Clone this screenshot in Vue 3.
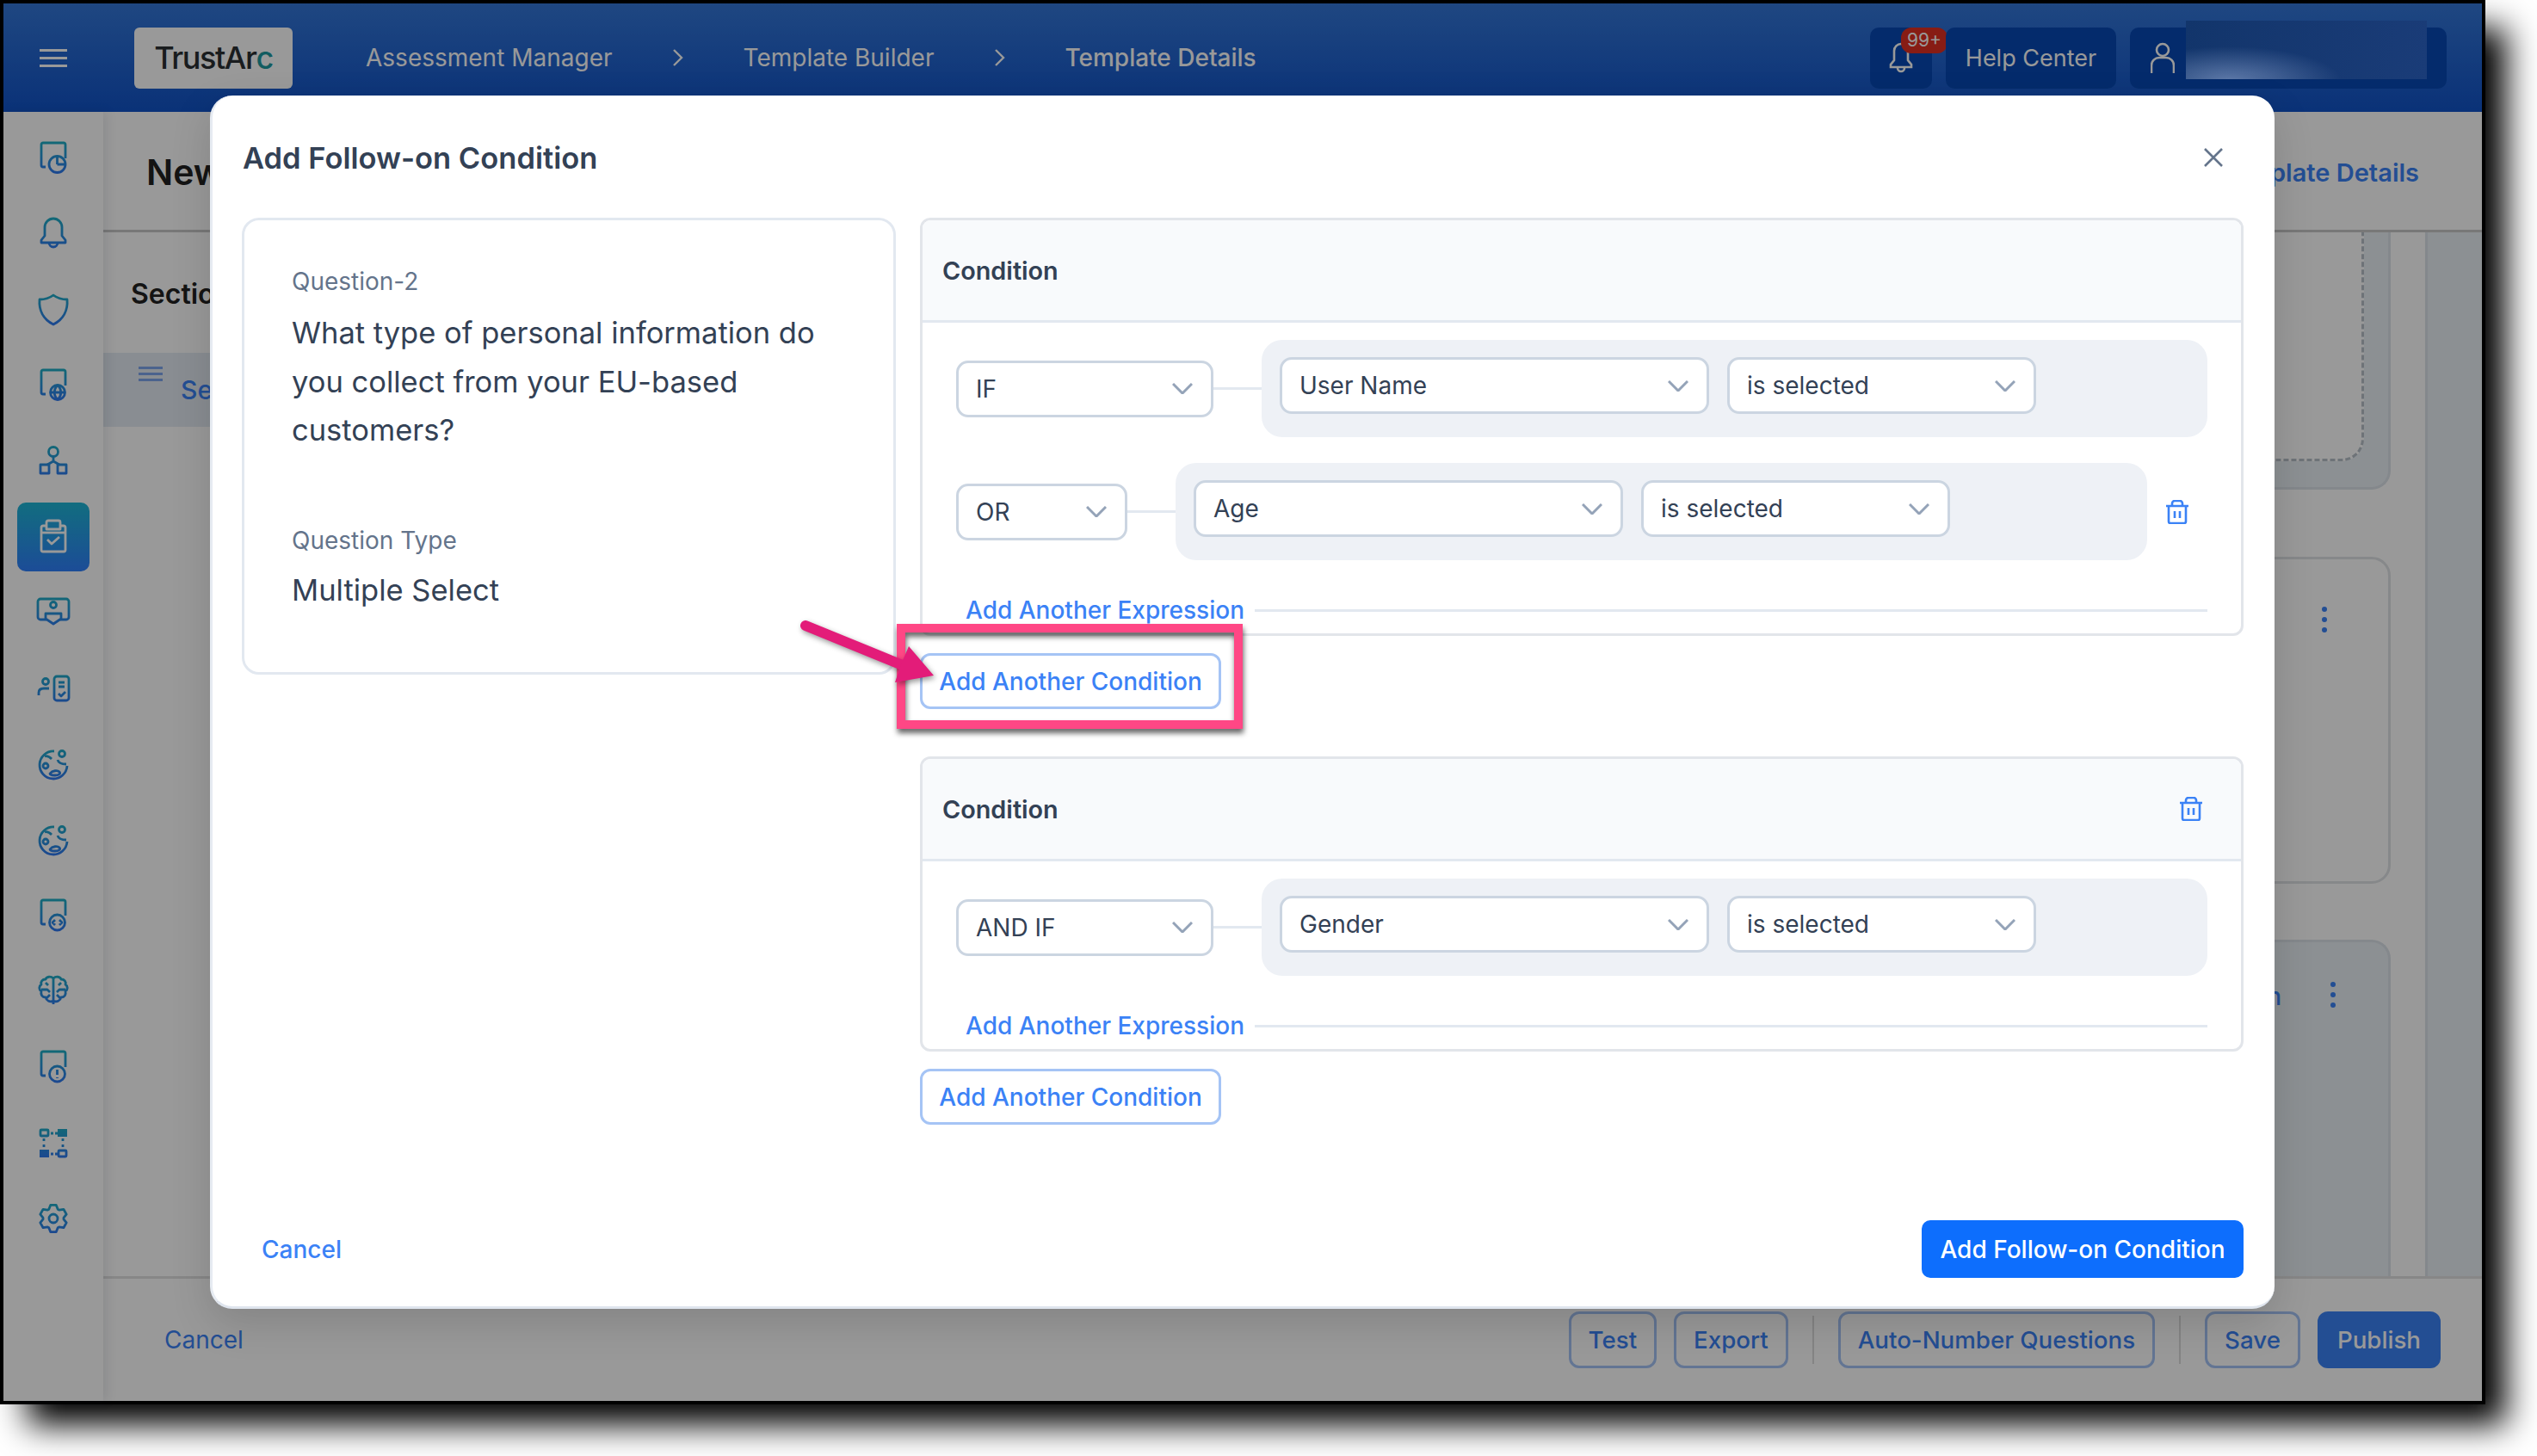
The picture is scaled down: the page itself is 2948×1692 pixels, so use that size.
<template>
  <div class="screen">
    <div class="frame">
      <header class="topbar">
        <div class="burger"><i></i><i></i><i></i></div>
        <div class="logo">TrustAr<span>c</span></div>
        <nav class="crumbs">
          <template v-for="(crumb, i) in crumbs" :key="crumb">
            <svg v-if="i > 0" class="crumb-sep" viewBox="0 0 13 20"><path d="M2 1l9 9-9 9" /></svg>
            <span :class="['crumb', i === crumbs.length - 1 ? 'current' : '']">{{ crumb }}</span>
          </template>
        </nav>
        <div class="top-actions">
          <div class="top-btn bell">
            <svg viewBox="0 0 28 36" class="top-icon">
              <path d="M14 2a8 8 0 0 0-8 8v11l-4 5v3h24v-3l-4-5V10a8 8 0 0 0-8-8z" />
              <path d="M10 30a4 4 0 0 0 8 0" />
            </svg>
            <span class="badge">99+</span>
          </div>
          <div class="top-btn help">Help Center</div>
          <div class="top-btn user">
            <svg viewBox="0 0 28 36" class="top-icon">
              <circle cx="14" cy="9" r="7" />
              <path d="M1 36V27a9 9 0 0 1 9-9h8a9 9 0 0 1 9 9v9" />
            </svg>
          </div>
        </div>
      </header>

      <div class="page">
        <aside class="sidebar">
          <svg class="defs" width="0" height="0">
            <defs>
              <linearGradient id="side-ico" gradientUnits="userSpaceOnUse" x1="0" y1="2" x2="0" y2="40">
                <stop offset="0" stop-color="#1eb0c4" />
                <stop offset="1" stop-color="#2f78f0" />
              </linearGradient>
            </defs>
          </svg>
          <div v-for="(icon, i) in sideIcons" :key="i" :class="['side-item', icon.active ? 'active' : '']">
            <svg viewBox="0 0 44 44" class="side-icon">
              <path v-for="d in icon.d" :key="d" :d="d" />
              <path v-for="d in icon.fill || []" :key="d" :d="d" class="solid" />
            </svg>
          </div>
        </aside>

        <main class="main">
          <div class="subhead">
            <h1>New Template</h1>
            <a class="details-link">Template Details</a>
          </div>
          <div class="work">
            <div class="outline">
              <div class="outline-title">Sections</div>
              <div class="outline-row">
                <div class="burger small"><i></i><i></i><i></i></div>
                <span>Section 1</span>
              </div>
            </div>
            <div class="canvas">
              <div class="q-card tinted first">
                <div class="dropzone"></div>
              </div>
              <div class="q-card second">
                <div class="kebab"><i></i><i></i><i></i></div>
              </div>
              <div class="q-card tinted third">
                <span class="q-label">Question</span>
                <div class="kebab"><i></i><i></i><i></i></div>
              </div>
            </div>
            <div class="rail"></div>
          </div>
          <footer class="page-foot">
            <a class="foot-cancel">Cancel</a>
            <div class="foot-actions">
              <button class="foot-btn">Test</button>
              <button class="foot-btn">Export</button>
              <i class="foot-sep"></i>
              <button class="foot-btn">Auto-Number Questions</button>
              <i class="foot-sep"></i>
              <button class="foot-btn">Save</button>
              <button class="foot-btn solid">Publish</button>
            </div>
          </footer>
        </main>
      </div>

      <div class="dim"></div>
      <div class="redacted"></div>

      <section class="modal">
        <div class="modal-head">
          <h2>Add Follow-on Condition</h2>
          <svg class="close" viewBox="0 0 24 24"><path d="M2 2l20 20M22 2L2 22" /></svg>
        </div>
        <div class="modal-body">
          <div class="summary">
            <div class="summary-label">Question-2</div>
            <div class="summary-text">What type of personal information do you collect from your EU-based customers?</div>
            <div class="summary-label type">Question Type</div>
            <div class="summary-value">Multiple Select</div>
          </div>
          <div class="conditions">
            <template v-for="(cond, c) in conditions" :key="c">
              <div class="cond-card">
                <div class="cond-head">
                  <span>Condition</span>
                  <svg v-if="cond.removable" class="trash" viewBox="0 0 28 28">
                    <path d="M1 7h26M4 7v18a2 2 0 0 0 2 2h16a2 2 0 0 0 2-2V7M8 7V4a3 3 0 0 1 3-3h6a3 3 0 0 1 3 3v3M11 13v8M17 13v8" />
                  </svg>
                </div>
                <div class="cond-body">
                  <div v-for="row in cond.rows" :key="row.field" class="cond-row">
                    <div :class="['select', row.narrow ? 'logic-narrow' : 'logic-wide']">
                      <span>{{ row.logic }}</span>
                      <svg viewBox="0 0 24 13"><path d="M1 1l11 11L23 1" /></svg>
                    </div>
                    <i class="link-line"></i>
                    <div class="expr">
                      <div class="select field">
                        <span>{{ row.field }}</span>
                        <svg viewBox="0 0 24 13"><path d="M1 1l11 11L23 1" /></svg>
                      </div>
                      <div class="select op">
                        <span>is selected</span>
                        <svg viewBox="0 0 24 13"><path d="M1 1l11 11L23 1" /></svg>
                      </div>
                    </div>
                    <div v-if="row.removable" class="row-trash">
                      <svg class="trash" viewBox="0 0 28 28">
                        <path d="M1 7h26M4 7v18a2 2 0 0 0 2 2h16a2 2 0 0 0 2-2V7M8 7V4a3 3 0 0 1 3-3h6a3 3 0 0 1 3 3v3M11 13v8M17 13v8" />
                      </svg>
                    </div>
                  </div>
                  <div class="add-expr">
                    <a>Add Another Expression</a>
                    <i></i>
                  </div>
                </div>
              </div>
              <button class="add-cond">Add Another Condition</button>
            </template>
          </div>
        </div>
        <div class="modal-foot">
          <a class="modal-cancel">Cancel</a>
          <button class="primary">Add Follow-on Condition</button>
        </div>
      </section>

      <!-- callout drawn on top of the screenshot -->
      <div class="callout-box"></div>
      <svg class="callout-arrow" viewBox="0 0 165 85">
        <path d="M7 8L122 55" />
        <polygon points="156,66 127,32 118,53 111,74" />
      </svg>
    </div>
  </div>
</template>

<script setup>
const crumbs = ['Assessment Manager', 'Template Builder', 'Template Details']

const conditions = [
  {
    removable: false,
    rows: [
      { logic: 'IF', field: 'User Name' },
      { logic: 'OR', field: 'Age', narrow: true, removable: true },
    ],
  },
  {
    removable: true,
    rows: [{ logic: 'AND IF', field: 'Gender' }],
  },
]

function circle(cx, cy, r) {
  return `M${cx - r} ${cy}a${r} ${r} 0 1 0 ${r * 2} 0a${r} ${r} 0 1 0 ${-r * 2} 0z`
}

// six lobed cog, same proportions as the nav icon
function cog(cx, cy, outer, inner) {
  const pts = []
  for (let i = 0; i < 6; i++) {
    const a = (Math.PI / 3) * i - Math.PI / 2
    const spread = 0.3
    pts.push([a - spread * 1.5, inner], [a - spread * 0.7, outer], [a + spread * 0.7, outer], [a + spread * 1.5, inner])
  }
  return (
    pts
      .map(([a, r], i) => `${i ? 'L' : 'M'}${(cx + Math.cos(a) * r).toFixed(1)} ${(cy + Math.sin(a) * r).toFixed(1)}`)
      .join('') + 'z'
  )
}

const docFrame = 'M36 22V6a2 2 0 0 0-2-2H10a2 2 0 0 0-2 2v24a2 2 0 0 0 2 2h3'

const sideIcons = [
  { d: [docFrame, circle(26.5, 29, 9.5), 'M26.5 29v-9.5M26.5 29h9.5'] },
  { d: ['M22 4a10 10 0 0 0-10 10v10l-4 5v3h28v-3l-4-5V14A10 10 0 0 0 22 4z', 'M17 32a5 5 0 0 0 10 0'] },
  { d: ['M22 5c4 3 10 5 16 5 1 12-4 23-16 29C10 33 5 22 6 10c6 0 12-2 16-5z'] },
  { d: [docFrame, circle(27, 30, 8.5), 'M18.5 30h17M27 21.5c-5 5-5 12 0 17M27 21.5c5 5 5 12 0 17'] },
  { d: [circle(22, 11, 5.5), 'M22 16.500v5.500M22 22l-7 4M22 22l7 4', 'M7 26h10v10H7zM27 26h10v10H27z'] },
  { d: ['M14 9h-4a2 2 0 0 0-2 2v26a2 2 0 0 0 2 2h24a2 2 0 0 0 2-2V11a2 2 0 0 0-2-2h-4', 'M14 5a2 2 0 0 1 2-2h12a2 2 0 0 1 2 2v8H14z', 'M15 25l5 5 9-8', 'M8 17h28'], active: true },
  { d: ['M14 30H7a3 3 0 0 1-3-3V9a3 3 0 0 1 3-3h30a3 3 0 0 1 3 3v18a3 3 0 0 1-3 3h-7', circle(22, 13, 3.5), 'M13 23h18v6l-9 6-9-6z'] },
  { d: ['M26 8h11a3 3 0 0 1 3 3v22a3 3 0 0 1-3 3H26a3 3 0 0 1-3-3V11a3 3 0 0 1 3-3z', 'M28 15h7M28 20h7M28 28l3 3 5-5', circle(13, 14, 3.5), 'M5 30v-3c0-4 3-5 6-5h6'] },
  { d: ['M23 7A16 16 0 1 0 38 24', circle(32, 10, 3.5), 'M27 17c1 4 5 5 10 5', circle(13, 24, 3), 'M12 13c3-1 6 1 8 3', 'M18 33c3-4 9-4 11-2s-1 4-5 4-6-1-6-2z'] },
  { d: ['M23 7A16 16 0 1 0 38 24', circle(32, 10, 3.5), 'M27 17c1 4 5 5 10 5', circle(13, 24, 3), 'M12 13c3-1 6 1 8 3', 'M18 33c3-4 9-4 11-2s-1 4-5 4-6-1-6-2z'] },
  { d: [docFrame, circle(26.5, 30, 9), 'M24 27l-3 3 3 3M29 27l3 3-3 3'] },
  { d: ['M22 7v30M22 7c-3-3-8-2-9 1-4 0-6 3-5 6-3 2-3 6 0 8-1 4 1 7 5 7 1 4 5 6 9 4M22 7c3-3 8-2 9 1 4 0 6 3 5 6 3 2 3 6 0 8 1 4-1 7-5 7-1 4-5 6-9 4', 'M8 20h7l3 3M13 12l3 3M14 30l4-4M36 20h-7l-3 3M31 12l-3 3M30 30l-4-4'] },
  { d: [docFrame, circle(26.5, 30, 9), 'M26.500 25v6M26.500 34v1'] },
  {
    d: ['M8 7h7a1 1 0 0 1 1 1v5a1 1 0 0 1-1 1H8a1 1 0 0 1-1-1V8a1 1 0 0 1 1-1z', 'M29 31h7a1 1 0 0 1 1 1v5a1 1 0 0 1-1 1h-7a1 1 0 0 1-1-1v-5a1 1 0 0 1 1-1z', 'M19 11h3M24 11h3M19 35h3M24 35h3M11 17v3M11 24v3M33 17v3M33 24v3'],
    fill: ['M27 6h11v9H27zM6 30h11v9H6z'],
  },
  { d: [cog(22, 22, 16, 12), circle(22, 22, 5)] },
]
</script>

<style>
html,
body {
  background: #fff;
}
</style>

<style scoped>
.screen {
  width: 2948px;
  height: 1692px;
  box-sizing: border-box;
  padding: 4px 0 0 4px;
  overflow: hidden;
}

.frame {
  position: relative;
  width: 2880px;
  height: 1624px;
  background: #fff;
  font-family: Inter, "Liberation Sans", sans-serif;
  box-shadow: 0 0 0 4px #000, 28px 28px 36px #000;
  display: flex;
  flex-direction: column;
  color: #334155;
}

/* page under the dialog */
.topbar {
  height: 126px;
  flex: none;
  display: flex;
  align-items: center;
  padding: 0 41px 0 42px;
  background: linear-gradient(#3477d8, #1153c8);
  color: #fff;
  font-size: 28px;
}

.burger {
  width: 32px;
  display: flex;
  flex-direction: column;
  gap: 6px;
}

.burger i {
  display: block;
  height: 3px;
  background: #fff;
}

.burger.small {
  width: 28px;
  gap: 4px;
  margin-top: -38px;
}

.burger.small i {
  background: #7da5ec;
}

.logo {
  margin-left: 78px;
  width: 184px;
  height: 71px;
  border-radius: 6px;
  background: #fff;
  color: #2a2f33;
  font-size: 36px;
  font-weight: 500;
  letter-spacing: -1.4px;
  display: flex;
  align-items: center;
  justify-content: center;
}

.logo span {
  color: #1f9aa0;
}

.crumbs {
  margin-left: 85px;
  display: flex;
  align-items: center;
  gap: 69.5px;
}

.crumb.current {
  font-weight: 500;
}

.crumb-sep {
  width: 13px;
  height: 20px;
  fill: none;
  stroke: #fff;
  stroke-width: 2.4;
}

.top-actions {
  margin-left: auto;
  display: flex;
  gap: 16px;
}

.top-btn {
  height: 71px;
  border-radius: 10px;
  background: #0749b4;
  display: flex;
  align-items: center;
  position: relative;
}

.top-btn.bell {
  width: 72px;
  justify-content: center;
}

.top-btn.help {
  width: 198px;
  justify-content: center;
  font-size: 27px;
}

.top-btn.user {
  width: 368px;
  padding-left: 24px;
  box-sizing: border-box;
}

.top-icon {
  width: 28px;
  height: 36px;
  fill: none;
  stroke: #fff;
  stroke-width: 2.6;
}

.badge {
  position: absolute;
  left: 36px;
  top: 0;
  width: 54px;
  height: 30px;
  border-radius: 12px;
  background: #e22f22;
  font-size: 21px;
  display: flex;
  align-items: center;
  justify-content: center;
}

.page {
  flex: 1;
  min-height: 0;
  display: flex;
}

.sidebar {
  width: 116px;
  flex: none;
  box-sizing: border-box;
  padding-top: 14px;
  background: #fff;
  display: flex;
  flex-direction: column;
  align-items: center;
  box-shadow: 4px 0 12px rgba(30, 40, 60, 0.1);
  position: relative;
}

.defs {
  position: absolute;
}

.side-item {
  width: 84px;
  height: 80px;
  margin-bottom: 8px;
  border-radius: 10px;
  display: flex;
  align-items: center;
  justify-content: center;
}

.side-item.active {
  background: linear-gradient(#1eb6d4, #2f7ffc);
}

.side-icon {
  width: 44px;
  height: 44px;
  fill: none;
  stroke: url(#side-ico);
  stroke-width: 2.8;
  stroke-linejoin: round;
}

.side-icon .solid {
  fill: url(#side-ico);
  stroke: none;
}

.active .side-icon {
  stroke: #fff;
}

.main {
  flex: 1;
  min-width: 0;
  display: flex;
  flex-direction: column;
}

.subhead {
  height: 140px;
  flex: none;
  box-sizing: border-box;
  border-bottom: 3px solid #c8c8c8;
  padding: 3px 73px 0 50px;
  display: flex;
  align-items: center;
  justify-content: space-between;
}

.subhead h1 {
  margin: 0;
  font-size: 41px;
  font-weight: 600;
  color: #222;
}

.details-link {
  color: #3b82f6;
  font-size: 29px;
  font-weight: 600;
}

.work {
  flex: 1;
  min-height: 0;
  display: flex;
  overflow: hidden;
}

.outline {
  width: 700px;
  flex: none;
}

.outline-title {
  height: 140px;
  box-sizing: border-box;
  padding: 52px 0 0 32px;
  font-size: 32px;
  font-weight: 600;
  color: #222;
}

.outline-row {
  height: 86px;
  background: #e4ebf3;
  display: flex;
  align-items: center;
  gap: 21px;
  padding-left: 41px;
  color: #3b82f6;
  font-size: 30px;
  font-weight: 500;
}

.canvas {
  flex: 1;
  min-width: 0;
  box-sizing: border-box;
  padding: 0 40px 0 200px;
  display: flex;
  flex-direction: column;
}

.q-card {
  border: 3px solid #e0e3e6;
  border-radius: 22px;
  box-sizing: border-box;
  position: relative;
  flex: none;
}

.q-card.tinted {
  background: #e9f0f6;
  border-color: #dde3e9;
}

.q-card.first {
  height: 299px;
  border-top: 0;
  border-radius: 0 0 22px 22px;
  padding: 0 28px 30px 0;
  display: flex;
}

.dropzone {
  flex: 1;
  background: #fff;
  border: 3px dashed #b8c0c8;
  border-top: 0;
  border-radius: 0 0 26px 0;
}

.q-card.second {
  height: 380px;
  margin-top: 78px;
  background: #fff;
  display: flex;
  justify-content: flex-end;
  padding: 55px 71px 0 0;
}

.q-card.third {
  flex: 1;
  margin-top: 65px;
  border-bottom: 0;
  border-radius: 22px 22px 0 0;
  display: flex;
  justify-content: flex-end;
  gap: 57px;
  padding: 46px 61px 0 0;
}

.q-label {
  font-size: 28px;
  color: #3b82f6;
  font-weight: 500;
}

.kebab {
  display: flex;
  flex-direction: column;
  gap: 6px;
  width: 6px;
}

.kebab i {
  width: 6px;
  height: 6px;
  border-radius: 50%;
  background: #3b82f6;
}

.rail {
  width: 66px;
  flex: none;
  background: #e9f0f6;
  border-left: 3px solid #dde3e9;
  box-sizing: border-box;
}

.page-foot {
  height: 145px;
  flex: none;
  box-sizing: border-box;
  border-top: 3px solid #e2e2e2;
  padding: 0 48px 0 71px;
  display: flex;
  align-items: center;
  justify-content: space-between;
}

.foot-cancel {
  color: #3b82f6;
  font-size: 28px;
}

.foot-actions {
  display: flex;
  align-items: center;
  gap: 20px;
}

.foot-btn {
  height: 66px;
  padding: 0 20px;
  font: 500 27.7px Inter, "Liberation Sans", sans-serif;
  color: #3b82f6;
  background: transparent;
  border: 3px solid #a5c4f5;
  border-radius: 12px;
}

.foot-btn.solid {
  background: #3b82f6;
  color: #fff;
  border-color: #3b82f6;
}

.foot-sep {
  width: 2px;
  height: 56px;
  margin: 0 8px;
  background: #dcdcdc;
}

.dim {
  position: absolute;
  inset: 0;
  background: rgba(0, 0, 0, 0.4);
}

.redacted {
  position: absolute;
  left: 2536px;
  top: 20px;
  width: 280px;
  height: 68px;
  background:
    radial-gradient(ellipse 130px 40px at 50px 70px, rgba(120, 145, 190, 0.75), rgba(120, 145, 190, 0)),
    linear-gradient(100deg, #12356b, #1a3c78);
}

/* dialog */
.modal {
  position: absolute;
  left: 240px;
  top: 107px;
  width: 2399px;
  height: 1410px;
  box-sizing: border-box;
  background: #fff;
  border-radius: 26px;
  border-left: 3px solid #e6ebf2;
  border-bottom: 3px solid #dfe5ee;
  box-shadow: 0 16px 48px rgba(0, 0, 0, 0.14);
  display: flex;
  flex-direction: column;
}

.modal-head {
  height: 142px;
  flex: none;
  box-sizing: border-box;
  padding: 2px 59px 0 35px;
  display: flex;
  align-items: center;
  justify-content: space-between;
}

.modal-head h2 {
  margin: 0;
  font-size: 34.5px;
  font-weight: 600;
  color: #334155;
}

.close {
  width: 24px;
  height: 24px;
  fill: none;
  stroke: #64748b;
  stroke-width: 2.6;
}

.modal-body {
  flex: 1;
  min-height: 0;
  padding: 0 36px 0 34px;
  display: flex;
  align-items: flex-start;
  gap: 28px;
}

.summary {
  width: 760px;
  height: 531px;
  flex: none;
  box-sizing: border-box;
  border: 3px solid #e2e8f0;
  border-radius: 20px;
  padding: 51px 40px 0 55px;
}

.summary-label {
  font-size: 28px;
  line-height: 40px;
  color: #64748b;
}

.summary-label.type {
  margin-top: 79px;
}

.summary-text {
  margin-top: 12px;
  font-size: 34.5px;
  line-height: 56.5px;
  color: #334155;
}

.summary-value {
  margin-top: 10px;
  font-size: 34.5px;
  line-height: 56px;
  color: #334155;
}

.conditions {
  flex: 1;
  min-width: 0;
  display: flex;
  flex-direction: column;
  align-items: flex-start;
}

.cond-card {
  align-self: stretch;
  box-sizing: border-box;
  border: 3px solid #e2e5ea;
  border-radius: 12px;
  overflow: hidden;
}

.cond-head {
  height: 119px;
  box-sizing: border-box;
  background: #f8fafc;
  border-bottom: 3px solid #e2e8f0;
  padding: 0 44px 0 23px;
  display: flex;
  align-items: center;
  justify-content: space-between;
  font-size: 28.8px;
  font-weight: 600;
  color: #334155;
}

.cond-body {
  padding: 20px 39px 9px 39px;
  display: flex;
  flex-direction: column;
  gap: 30px;
}

.cond-row {
  display: flex;
  align-items: center;
}

.select {
  height: 66px;
  box-sizing: border-box;
  flex: none;
  background: #fff;
  border: 3px solid #cbd5e1;
  border-radius: 14px;
  padding: 0 21px 0 20px;
  display: flex;
  align-items: center;
  justify-content: space-between;
  font-size: 28px;
  color: #334155;
}

.select svg {
  width: 24px;
  height: 13px;
  fill: none;
  stroke: #94a3b8;
  stroke-width: 3;
}

.logic-wide {
  width: 299px;
}

.logic-narrow {
  width: 199px;
}

.link-line {
  width: 56px;
  height: 3px;
  flex: none;
  background: #e2e8f0;
}

.expr {
  flex: 1;
  min-width: 0;
  box-sizing: border-box;
  height: 113px;
  padding: 20px 21px 0;
  border-radius: 24px;
  background: #eef1f6;
  display: flex;
  align-items: flex-start;
  gap: 21px;
}

.select.field {
  width: 499px;
}

.select.op {
  width: 359px;
}

.row-trash {
  width: 70px;
  flex: none;
  display: flex;
  justify-content: center;
}

.trash {
  width: 28px;
  height: 28px;
  fill: none;
  stroke: #3b82f6;
  stroke-width: 2.6;
}

.add-expr {
  margin-top: 10px;
  padding-left: 11px;
  display: flex;
  align-items: center;
  gap: 12px;
  color: #3b82f6;
  font-size: 28px;
  font-weight: 500;
  line-height: 36px;
}

.add-expr i {
  flex: 1;
  height: 3px;
  background: #e2e8f0;
}

.add-cond {
  margin: 20px 0 55px;
  width: 350px;
  height: 65px;
  background: #fff;
  border: 3px solid #a5c4f5;
  border-radius: 12px;
  color: #3b82f6;
  font: 500 28px Inter, "Liberation Sans", sans-serif;
}

.modal-foot {
  flex: none;
  padding: 0 36px 33px 57px;
  display: flex;
  align-items: center;
  justify-content: space-between;
}

.modal-cancel {
  color: #3b82f6;
  font-size: 28px;
  font-weight: 500;
}

.primary {
  width: 374px;
  height: 67px;
  border: 0;
  border-radius: 10px;
  background: #0d6efd;
  color: #fff;
  font: 500 28px Inter, "Liberation Sans", sans-serif;
}

/* annotation layer */
.callout-box {
  position: absolute;
  left: 1038px;
  top: 721px;
  width: 402px;
  height: 122px;
  box-sizing: border-box;
  border: 10px solid #ff4785;
  filter: drop-shadow(1px 5px 3px rgba(0, 0, 0, 0.6));
}

.callout-arrow {
  position: absolute;
  left: 925px;
  top: 715px;
  width: 165px;
  height: 85px;
  overflow: visible;
  filter: drop-shadow(2px 3px 3px rgba(0, 0, 0, 0.4));
}

.callout-arrow path {
  fill: none;
  stroke: #e31c79;
  stroke-width: 12;
  stroke-linecap: round;
}

.callout-arrow polygon {
  fill: #e31c79;
}
</style>
